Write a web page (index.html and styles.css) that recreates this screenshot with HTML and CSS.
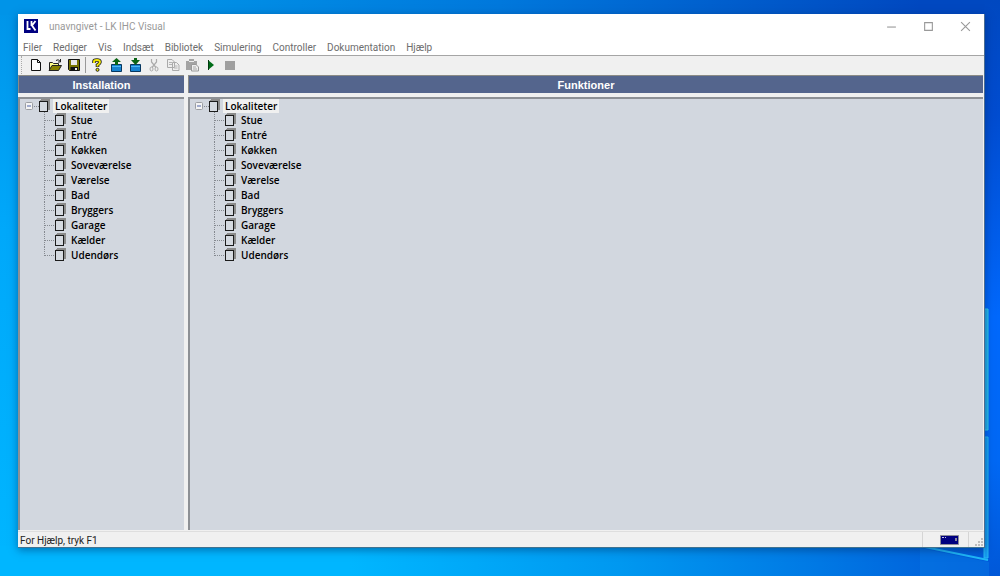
FILE: index.html
```html
<!DOCTYPE html>
<html lang="da">
<head>
<meta charset="utf-8">
<title>unavngivet - LK IHC Visual</title>
<link rel="stylesheet" href="styles.css">
</head>
<body>
<svg width="0" height="0" class="defs" aria-hidden="true">
  <symbol id="room" viewBox="0 0 12 14">
    <path d="M1 2V1H2V0H11V11H9V2Z" fill="#8b8b8b"/>
    <rect x=".5" y="2.500" width="8" height="10" fill="#d5dae1" stroke="#1c1c1c"/>
  </symbol>
  <symbol id="branch" viewBox="0 0 11 15">
    <path d="M.5 0V15M1 8.500H11" stroke="#858990" stroke-dasharray="1 1" fill="none"/>
  </symbol>
  <symbol id="branch-end" viewBox="0 0 11 15">
    <path d="M.5 0V9M1 8.500H11" stroke="#858990" stroke-dasharray="1 1" fill="none"/>
  </symbol>
  <symbol id="collapse" viewBox="0 0 14 15">
    <rect x=".5" y="4.500" width="7" height="7" rx="1" fill="#f4f4f4" stroke="#9b9ea3"/>
    <path d="M2 8H6" stroke="#4c63a8"/>
    <path d="M9 8.500H14" stroke="#858990" stroke-dasharray="1 1"/>
  </symbol>
</svg>
<svg class="beam" viewBox="0 0 80 270" aria-hidden="true">
  <path d="M0 240L68 254" stroke="#20b8f8" stroke-width="2" fill="none"/>
  <path d="M0 242L69 256V270H0Z" fill="#0878e4" opacity=".5"/>
  <path d="M64 3H68V124H64Z" fill="#25aee8" stroke="#35d0ee"/>
  <path d="M64 131H68V252H64Z" fill="#159cf0" stroke="#28baf4"/>
</svg>
<main class="window">
  <header class="titlebar">
    <svg class="logo" viewBox="0 0 14 14" role="img" aria-label="LK"><path fill="#000080" d="M0 0h14v14H0z"/><path d="M3.500 2V10H6.500M7.500 2V7M11.500 2L8 6.500L11.500 11.500" fill="none" stroke="#fff" stroke-width="1.800"/></svg>
    <h1 class="title">unavngivet - LK IHC Visual</h1>
    <div class="controls">
      <button class="control" aria-label="Minimer"><svg viewBox="0 0 10 10"><path d="M1 5.500H9"/></svg></button>
      <button class="control" aria-label="Maksimer"><svg viewBox="0 0 10 10"><path d="M1.500 1.500H8.500V8.500H1.500Z"/></svg></button>
      <button class="control" aria-label="Luk"><svg viewBox="0 0 10 10"><path d="M1 1L9 9M9 1L1 9"/></svg></button>
    </div>
  </header>
  <nav class="menu">
    <button>Filer</button><button>Rediger</button><button>Vis</button><button>Indsæt</button><button>Bibliotek</button><button>Simulering</button><button>Controller</button><button>Dokumentation</button><button>Hjælp</button>
  </nav>
  <div class="toolbar" role="toolbar">
    <span class="grip"></span>
    <button aria-label="Ny"><svg viewBox="0 0 14 14"><path d="M2.500 1.500H8.500L11.500 4.500V12.500H2.500Z" fill="#fff" stroke="#111"/><path d="M8.500 1.500V4.500H11.500" fill="none" stroke="#111"/></svg></button>
    <button aria-label="Åbn"><svg viewBox="0 0 14 14"><path d="M1.500 12V4.500H4.500L5.500 5.500H10.500V7.500" fill="#ffff8c" stroke="#222"/><path d="M1 12.500L4 7.500H13.500L10.500 12.500Z" fill="#888300" stroke="#222"/><path d="M8 2.500Q10 .5 12.500 3.500M12.500 1V4H10" fill="none" stroke="#222"/></svg></button>
    <button aria-label="Gem"><svg viewBox="0 0 14 14"><path d="M1.500 1.500H12.500V12.500H2.500L1.500 11.500Z" fill="#777400" stroke="#111"/><path d="M4 2H10V7H4Z" fill="#e8e8e8"/><path d="M3.500 9H11V12.500H3.500Z" fill="#111"/><path d="M8 10H10V12H8Z" fill="#eee"/></svg></button>
    <span class="separator"></span>
    <button aria-label="Hjælp"><svg viewBox="0 0 14 14"><path d="M4 5V3.500Q4 2 7 2T10 4Q10 5.500 7.500 7V9" fill="none" stroke="#222" stroke-width="3.600"/><path d="M4 5V3.500Q4 2 7 2T10 4Q10 5.500 7.500 7V8.500" fill="none" stroke="#f4e800" stroke-width="1.900"/><circle cx="7.500" cy="11.800" r="1.500" fill="#f4e800" stroke="#222"/></svg></button>
    <button aria-label="Hent"><svg viewBox="0 0 14 14"><path d="M2.500 6.500H12.500V13.500H2.500Z" fill="#1683d0" stroke="#08375f"/><path d="M3 8.500H12" stroke="#4cb8f4"/><path d="M7.500 0L12 4H9V7H6V4H3Z" fill="#0a6514"/></svg></button>
    <button aria-label="Send"><svg viewBox="0 0 14 14"><path d="M2.500 6.500H12.500V13.500H2.500Z" fill="#1683d0" stroke="#08375f"/><path d="M3 8.500H12" stroke="#4cb8f4"/><path d="M6 0H9V2H12L7.500 7L3 2H6Z" fill="#0a6514"/></svg></button>
    <button aria-label="Klip" disabled><svg viewBox="0 0 14 14"><path d="M4.500 1V4L9 9.500M9.500 1V4L5 9.500" fill="none" stroke="#aaa" stroke-width="1.200"/><ellipse cx="4.500" cy="11" rx="1.500" ry="2" fill="none" stroke="#aaa"/><ellipse cx="9.500" cy="11" rx="1.500" ry="2" fill="none" stroke="#aaa"/></svg></button>
    <button aria-label="Kopier" disabled><svg viewBox="0 0 14 14"><path d="M1.500 1.500H6L8.500 4V9.500H1.500ZM6.500 4.500H10.500L13 7V12.500H6.500Z" fill="#eee" stroke="#aaa"/><path d="M3 4.500H6M3 6.500H6M8 8H11.500M8 10H11.500" stroke="#b4b4b4"/></svg></button>
    <button aria-label="Sæt ind" disabled><svg viewBox="0 0 14 14"><path d="M1 3H4V1H9V3H12V12H1Z" fill="#a4a4a4"/><path d="M4 3.500H9" stroke="#eee"/><path d="M6.500 6.500H11L13.500 9V13H6.500Z" fill="#eee" stroke="#999"/><path d="M8 9H11M8 11H12" stroke="#aaa"/></svg></button>
    <button aria-label="Start"><svg viewBox="0 0 14 14"><path d="M4 2L10 7L4 12Z" fill="#006c18"/><path d="M4.500 2V12" stroke="#033b10"/></svg></button>
    <button aria-label="Stop" disabled><svg viewBox="0 0 14 14"><path d="M2 3H12V12H2Z" fill="#9f9f9f"/></svg></button>
  </div>
  <div class="workspace">
    <section class="pane">
      <h2 class="heading">Installation</h2>
      <div class="tree">
        <div class="root"><button class="toggle" aria-label="Fold sammen"><svg><use href="#collapse"/></svg></button><svg class="room"><use href="#room"/></svg><span class="label selected">Lokaliteter</span></div>
        <ul class="children">
          <li><svg class="branch"><use href="#branch"/></svg><svg class="room"><use href="#room"/></svg><span class="label">Stue</span></li>
          <li><svg class="branch"><use href="#branch"/></svg><svg class="room"><use href="#room"/></svg><span class="label">Entré</span></li>
          <li><svg class="branch"><use href="#branch"/></svg><svg class="room"><use href="#room"/></svg><span class="label">Køkken</span></li>
          <li><svg class="branch"><use href="#branch"/></svg><svg class="room"><use href="#room"/></svg><span class="label">Soveværelse</span></li>
          <li><svg class="branch"><use href="#branch"/></svg><svg class="room"><use href="#room"/></svg><span class="label">Værelse</span></li>
          <li><svg class="branch"><use href="#branch"/></svg><svg class="room"><use href="#room"/></svg><span class="label">Bad</span></li>
          <li><svg class="branch"><use href="#branch"/></svg><svg class="room"><use href="#room"/></svg><span class="label">Bryggers</span></li>
          <li><svg class="branch"><use href="#branch"/></svg><svg class="room"><use href="#room"/></svg><span class="label">Garage</span></li>
          <li><svg class="branch"><use href="#branch"/></svg><svg class="room"><use href="#room"/></svg><span class="label">Kælder</span></li>
          <li><svg class="branch"><use href="#branch-end"/></svg><svg class="room"><use href="#room"/></svg><span class="label">Udendørs</span></li>
        </ul>
      </div>
    </section>
    <section class="pane">
      <h2 class="heading">Funktioner</h2>
      <div class="tree">
        <div class="root"><button class="toggle" aria-label="Fold sammen"><svg><use href="#collapse"/></svg></button><svg class="room"><use href="#room"/></svg><span class="label selected">Lokaliteter</span></div>
        <ul class="children">
          <li><svg class="branch"><use href="#branch"/></svg><svg class="room"><use href="#room"/></svg><span class="label">Stue</span></li>
          <li><svg class="branch"><use href="#branch"/></svg><svg class="room"><use href="#room"/></svg><span class="label">Entré</span></li>
          <li><svg class="branch"><use href="#branch"/></svg><svg class="room"><use href="#room"/></svg><span class="label">Køkken</span></li>
          <li><svg class="branch"><use href="#branch"/></svg><svg class="room"><use href="#room"/></svg><span class="label">Soveværelse</span></li>
          <li><svg class="branch"><use href="#branch"/></svg><svg class="room"><use href="#room"/></svg><span class="label">Værelse</span></li>
          <li><svg class="branch"><use href="#branch"/></svg><svg class="room"><use href="#room"/></svg><span class="label">Bad</span></li>
          <li><svg class="branch"><use href="#branch"/></svg><svg class="room"><use href="#room"/></svg><span class="label">Bryggers</span></li>
          <li><svg class="branch"><use href="#branch"/></svg><svg class="room"><use href="#room"/></svg><span class="label">Garage</span></li>
          <li><svg class="branch"><use href="#branch"/></svg><svg class="room"><use href="#room"/></svg><span class="label">Kælder</span></li>
          <li><svg class="branch"><use href="#branch-end"/></svg><svg class="room"><use href="#room"/></svg><span class="label">Udendørs</span></li>
        </ul>
      </div>
    </section>
  </div>
  <footer class="status">
    <span class="message">For Hjælp, tryk F1</span>
    <span class="device"><svg viewBox="0 0 19 10"><path d="M.5 .5H18.500V9.500H.5Z" fill="#000080" stroke="#8c8c98"/><path d="M2 2.500H4M5 2.500H6" stroke="#c0c0e8"/><path d="M15 3H17V6H15Z" fill="#8888a0"/></svg></span>
    <span class="resize"><svg viewBox="0 0 8 8"><path d="M6 0H8V2H6ZM3 3H5V5H3ZM6 3H8V5H6ZM0 6H2V8H0ZM3 6H5V8H3ZM6 6H8V8H6Z" fill="#bdbdbd"/></svg></span>
  </footer>
</main>
</body>
</html>
```
FILE: styles.css
```css
* { box-sizing: border-box; }
body {
  margin: 0;
  min-height: 100vh;
  padding: 14px 15px 28px 18px;
  display: flex;
  font: 10px/14px Roboto, "Open Sans", sans-serif;
  background:
    linear-gradient(to bottom, #0048c0, #004cd0 20%, #0068fc 55%, #0068f4 80%, #0058d8) right / 16px 100% no-repeat,
    linear-gradient(to right, #00b6ff 35%, #0098f0 62%, #0078e4 82%, #0058d8) bottom / 100% 30px no-repeat,
    linear-gradient(to right, #0094e8 15%, #0078dc 50%, #0048c0 92%) top / 100% 15px no-repeat,
    linear-gradient(#0094e8, #00a8fa 40%, #00b6ff);
}
button { border: 0; padding: 0; background: none; font: inherit; color: inherit; }
svg { display: block; }
.defs { position: absolute; }
.beam { position: absolute; right: 0; bottom: 0; width: 80px; height: 270px; }
.window {
  position: relative;
  flex: 1;
  min-width: 0;
  display: flex;
  flex-direction: column;
  background: #f0f0f0;
  border-right: 1px solid #4d6d91;
  border-bottom: 1px solid #3f7391;
  box-shadow: 0 2px 8px #00286080;
}
.titlebar { display: flex; align-items: center; height: 24px; padding-left: 6px; background: #fff; color: #999; }
.logo { width: 14px; height: 14px; }
.title { flex: 1; margin: 0 0 0 11px; padding-top: 2px; font-size: 10px; font-weight: 400; }
.controls { display: flex; }
.control { width: 37px; height: 24px; display: grid; place-items: center; }
.control svg { width: 11px; height: 11px; fill: none; stroke: #999; }
.menu { display: flex; gap: 11px; height: 18px; padding: 2px 5px 0; background: #fff; color: #6d6d6d; border-bottom: 1px solid #a5a5a5; }
.toolbar { display: flex; align-items: flex-start; height: 19px; padding-left: 3px; }
.toolbar button { width: 19px; height: 18px; display: grid; place-items: center; }
.toolbar svg { width: 14px; height: 14px; }
.grip { width: 5px; height: 18px; border-left: 1px dotted #aaa; }
.separator { width: 1px; height: 16px; margin: 1px 1px 0 2px; background: #999; }
.workspace { flex: 1; display: grid; grid-template-columns: 166px minmax(0, 1fr); gap: 4px; padding-right: 1px; }
.pane { display: flex; flex-direction: column; gap: 4px; }
.heading {
  height: 18px; margin: 0;
  border-top: 1px solid #8b8b86; border-left: 1px solid #8b8b86;
  background: #54658d; color: #fff;
  font: bold 11px/18px "Liberation Sans", Arial, sans-serif;
  text-align: center;
}
.tree {
  flex: 1; padding-left: 5px;
  background: #d2d7df; color: #000;
  border-top: 2px solid #8d9095; border-left: 2px solid #8d9095;
  font-family: "Open Sans", "Noto Sans", sans-serif; font-weight: 600;
}
.root, .children li { display: flex; align-items: center; height: 15px; }
.root { height: 13px; }
.toggle, .toggle svg { width: 14px; height: 15px; }
.room { width: 12px; height: 14px; }
.label { padding: 0 2px; margin-left: 2px; }
.selected { background: #f0f0f0; }
.children { margin: 0; padding: 0 0 0 19px; list-style: none; }
.branch { width: 11px; height: 15px; }
.status { display: flex; height: 16px; margin-top: 1px; border-top: 1px solid #dedede; color: #222; }
.message { flex: 1; padding: 1px 2px 0; line-height: 15px; }
.device { width: 46px; display: grid; place-items: center; padding-left: 7px; border-left: 1px solid #d5d5d5; }
.device svg { width: 19px; height: 10px; }
.resize { width: 16px; display: flex; align-items: flex-end; justify-content: flex-end; border-left: 1px solid #d5d5d5; padding: 0 1px 1px 0; }
.resize svg { width: 8px; height: 8px; }
```
